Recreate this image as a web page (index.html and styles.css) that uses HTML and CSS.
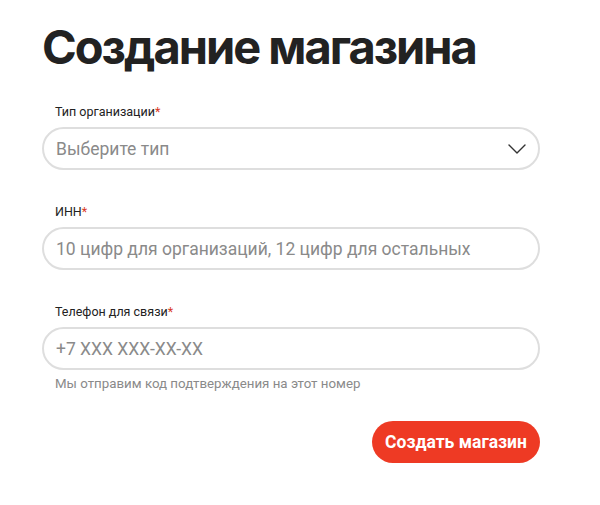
FILE: index.html
```html
<!DOCTYPE html>
<html lang="ru">
<head>
<meta charset="utf-8">
<link rel="stylesheet" href="styles.css">
</head>
<body>
<main class="page">
  <h1 class="title">Создание магазина</h1>
  <form class="form">
    <div class="field">
      <label class="label">Тип организации<span class="req">*</span></label>
      <div class="input select">
        <span class="placeholder">Выберите тип</span>
        <svg class="chevron" width="18" height="10" viewBox="0 0 18 10"><path d="M1 1l8 8 8-8" fill="none" stroke="#333" stroke-width="1.4" stroke-linecap="round" stroke-linejoin="round"/></svg>
      </div>
    </div>
    <div class="field">
      <label class="label">ИНН<span class="req">*</span></label>
      <div class="input"><span class="placeholder">10 цифр для организаций, 12 цифр для остальных</span></div>
    </div>
    <div class="field field-last">
      <label class="label">Телефон для связи<span class="req">*</span></label>
      <div class="input"><span class="placeholder">+7 XXX XXX-XX-XX</span></div>
      <p class="hint">Мы отправим код подтверждения на этот номер</p>
    </div>
    <div class="actions">
      <button type="button" class="btn">Создать магазин</button>
    </div>
  </form>
</main>
</body>
</html>
```
FILE: styles.css
```css
html, body { margin: 0; padding: 0; background: #fff; }
body { font-family: Roboto, "Noto Sans", sans-serif; color: #222; }
.page { width: 498px; padding: 18px 0 0 42px; }
.title {
  margin: 0;
  font-family: Inter, Roboto, sans-serif;
  font-weight: 700;
  font-size: 47px;
  line-height: 58px;
  letter-spacing: -2px;
  color: #222;
}
.form { display: flex; flex-direction: column; margin-top: 28px; }
.field { display: flex; flex-direction: column; margin-bottom: 34px; }
.field-last { margin-bottom: 30px; }
.label { font-size: 12.5px; line-height: 16px; color: #222; padding-left: 13px; margin-bottom: 7px; }
.req { color: #d9381e; }
.input {
  box-sizing: border-box;
  height: 43px;
  border: 2px solid #dedede;
  border-radius: 22px;
  display: flex;
  align-items: center;
  padding: 0 12px;
}
.placeholder { font-size: 17.5px; color: #8a8a8a; }
.select { justify-content: space-between; padding-right: 12px; }
.chevron { display: block; }
.hint { margin: 6px 0 0 13px; font-size: 13.3px; line-height: 15px; color: #8a8a8a; }
.actions { display: flex; justify-content: flex-end; }
.btn {
  height: 42px;
  width: 168px;
  border: 0;
  border-radius: 21px;
  background: #ee3a24;
  color: #fff;
  font-family: Roboto, sans-serif;
  font-weight: 700;
  font-size: 17.5px;
}
```
